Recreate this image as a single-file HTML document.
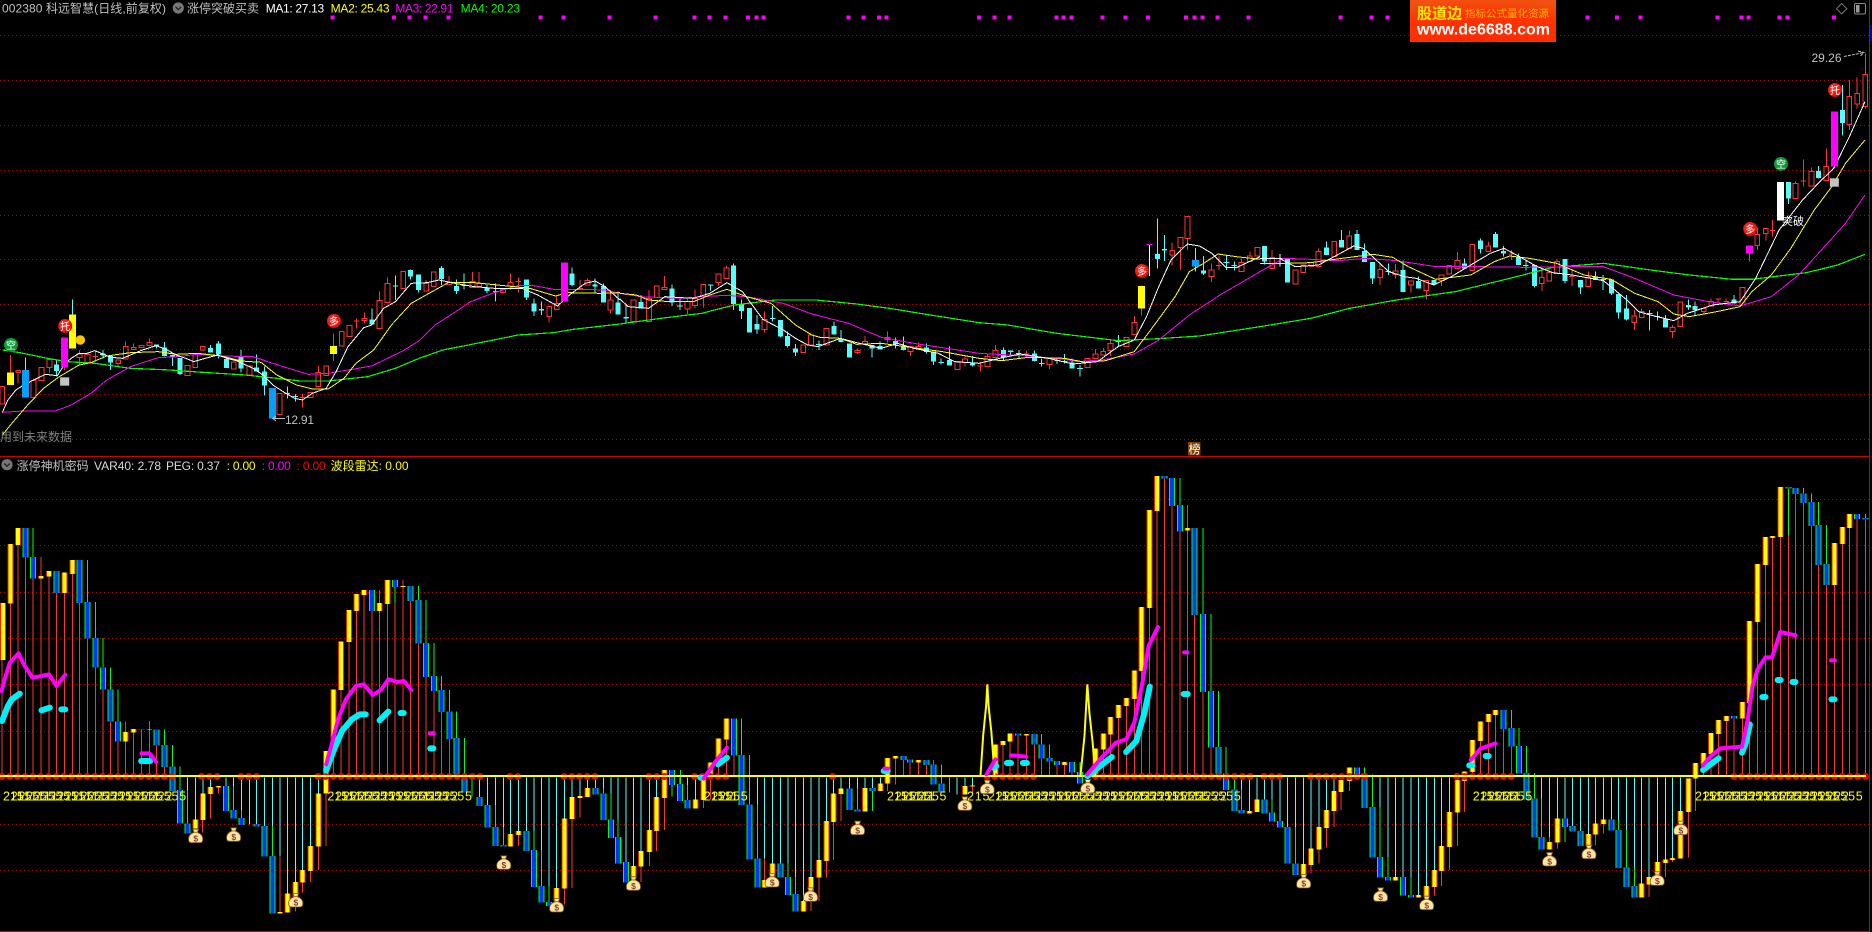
<!DOCTYPE html>
<html lang="zh">
<head>
<meta charset="utf-8">
<title>涨停神机密码</title>
<style>
html,body{margin:0;padding:0;background:#000;width:1872px;height:932px;overflow:hidden}
svg{display:block;position:absolute;left:0;top:0;font-family:"Liberation Sans","Noto Sans CJK SC",sans-serif}
path,polyline,rect,circle{vector-effect:non-scaling-stroke}
polyline,.n{fill:none}
.ma1{stroke:#fff;stroke-width:1;shape-rendering:crispEdges}
.ma2{stroke:#ff0;stroke-width:1;shape-rendering:crispEdges}
.ma3{stroke:#f0f;stroke-width:1;shape-rendering:crispEdges}
.ma4{stroke:#0f0;stroke-width:1.2;shape-rendering:crispEdges}
.wr{stroke:#ff3232;stroke-width:1;fill:none;shape-rendering:crispEdges}
.wc{stroke:#54fcfc;stroke-width:1;fill:none;shape-rendering:crispEdges}
.wg{stroke:#0f0;stroke-width:1;fill:none;shape-rendering:crispEdges}
.hr{fill:#000;stroke:#ff3232;stroke-width:1;shape-rendering:crispEdges}
.bc{stroke:#54fcfc;stroke-width:5;fill:none;shape-rendering:crispEdges}
.by{stroke:#ff0;stroke-width:7;fill:none;shape-rendering:crispEdges}
.bb{stroke:#00a0ff;stroke-width:7;fill:none;shape-rendering:crispEdges}
.bm{stroke:#f0f;stroke-width:7;fill:none;shape-rendering:crispEdges}
.bw{stroke:#fff;stroke-width:7;fill:none;shape-rendering:crispEdges}
.pt{stroke:#f0f;stroke-width:4;fill:none;shape-rendering:crispEdges}
.ho{stroke:#f02000;stroke-width:6;fill:none;shape-rendering:crispEdges}
.hy{stroke:#ff0;stroke-width:4;fill:none;shape-rendering:crispEdges}
.ge{stroke:#0f0;stroke-width:6;fill:none;shape-rendering:crispEdges}
.bl{stroke:#0038ff;stroke-width:4;fill:none;shape-rendering:crispEdges}
.tm{stroke:#f0f;stroke-width:4;fill:none;stroke-linecap:round;stroke-linejoin:round}
.tc{stroke:#00f0f8;stroke-width:6;fill:none;stroke-linecap:round;stroke-linejoin:round}
.dg{font-size:12.5px;fill:#ff0;letter-spacing:.78px}
</style>
</head>
<body>
<svg width="1872" height="932" viewBox="0 0 1872 932" xmlns="http://www.w3.org/2000/svg">
<defs>
<g id="bag">
<path d="M-3-7.5h6l-1.4 3.2q6 2.2 5.4 7.3 0 3-3 3h-8.1q-3 0-3-3-.6-5.1 5.4-7.3z" fill="#fbe6a4" stroke="#7a5410" stroke-width=".8"/>
<path d="M-2.2-4.4h4.4" stroke="#b07000" stroke-width="1" fill="none"/>
<text x="0" y="4.6" font-size="8.5" font-weight="bold" fill="#8a3a30" text-anchor="middle">$</text>
</g>
<radialGradient id="lg" cx=".5" cy="1" r="1">
<stop offset="0" stop-color="#ff2800"/><stop offset=".7" stop-color="#ff3400"/><stop offset="1" stop-color="#f05010"/>
</radialGradient>
<radialGradient id="rb" cx=".42" cy=".38" r=".7">
<stop offset="0" stop-color="#ff3a2a"/><stop offset=".8" stop-color="#e01010"/><stop offset="1" stop-color="#900"/>
</radialGradient>
<radialGradient id="gb" cx=".42" cy=".38" r=".7">
<stop offset="0" stop-color="#18b048"/><stop offset=".8" stop-color="#0a9030"/><stop offset="1" stop-color="#064"/>
</radialGradient>
</defs>

<!-- grid -->
<path d="M0 35.5H1869M0 80.5H1869M0 125.5H1869M0 170.5H1869M0 215.5H1869M0 259.5H1869M0 304.5H1869M0 349.5H1869M0 394.5H1869M0 439.5H1869M0 499.5H1869M0 545.5H1869M0 592.5H1869M0 638.5H1869M0 684.5H1869M0 731.5H1869M0 824.5H1869M0 870.5H1869" stroke="#b00000" stroke-width="1" stroke-dasharray="1 3" fill="none" shape-rendering="crispEdges"/>

<!-- UPPER PANEL 1 -->
<g transform="scale(.3954 .33333)">
<path class="pt" d="M841 46v12M997 46v12M1036 46v12M1076 46v12M1134 46v12M1367 46v12M1425 46v12M1541 46v12"/>
<path class="wr" d="M26 1065V1155M46 1111V1150M85 1135V1192M125 1078V1118M201 1052V1095M241 1052V1085M234 1070h14M299 1080V1100M318 1025V1077M338 1030V1050M378 1015V1040M513 1036V1055M765 1180V1223M758 1193h14M805 1098V1160M844 1000V1083M902 955V985M895 963h14M922 938V970M960 875V985M980 832V908M1078 840V873M1136 828V853M1195 816V862M1212 816V860M1291 820V870M1311 832V878M1304 845h14M1389 919V968M1408 890V928M1467 840V870M1460 865h14M1486 835V855M1544 870V940M163 1103V1110"/>
<path class="wc" d="M65 1072V1193M143 1078V1130M183 898V943M260 1050V1075M253 1063h14M280 1068V1110M396 1033V1045M416 1026V1070M436 1065V1098M455 1074V1125M533 1035V1057M552 1023V1075M573 1073V1104M610 1050V1118M649 1063V1115M669 1100V1187M727 1160V1195M720 1180h14M747 1182V1205M740 1189h14M941 925V974M1000 826V900M1038 808V838M1058 823V878M1116 798V855M1155 838V882M1174 820V868M1232 855V880M1253 850V905M1331 838V900M1350 895V948M1369 905V945M1447 802V860M1505 835V880M1526 850V908M1563 875V943"/>
<path class="hr" d="M0 1160h12V1212H0zM40 1111h12V1117h-12zM79 1142h12V1192h-12zM99 1103h12V1142h-12zM119 1078h12V1103h-12zM195 1062h12V1073h-12zM215 1063h12V1088h-12zM293 1080h12V1090h-12zM312 1040h12V1077h-12zM332 1042h12V1049h-12zM352 1036h12V1042h-12zM372 1027h12V1037h-12zM468 1097h12V1127h-12zM488 1063h12V1102h-12zM507 1040h12V1050h-12zM585 1086h12V1107h-12zM625 1098h12V1125h-12zM701 1180h12V1244h-12zM779 1178h12V1193h-12zM799 1118h12V1160h-12zM819 1098h12V1127h-12zM858 995h12V1038h-12zM878 976h12V1010h-12zM916 955h12V962h-12zM954 901h12V985h-12zM974 850h12V908h-12zM1014 814h12V866h-12zM1072 850h12V873h-12zM1091 816h12V860h-12zM1130 846h12V853h-12zM1189 845h12V862h-12zM1206 850h12V860h-12zM1266 868h12V878h-12zM1285 847h12V858h-12zM1383 919h12V950h-12zM1402 910h12V928h-12zM1480 842h12V855h-12zM1538 900h12V930h-12z"/>
<path class="bc" d="M143 1093V1113M260 1060V1066M280 1068V1088M396 1033V1040M416 1043V1068M436 1065V1072M455 1074V1122M533 1044V1057M552 1030V1063M573 1077V1104M610 1068V1106M649 1103V1115M669 1114V1157M941 958V974M1000 856V860M1038 810V830M1058 823V870M1116 804V837M1155 858V873M1174 855V858M1232 862V873M1253 873V876M1331 838V893M1350 910V935M1369 927V931M1447 820V855M1505 853V860M1526 858V908M1563 908V943"/>
<polyline class="ma4" points="6,1050 50,1058 120,1075 170,1085 240,1090 330,1105 430,1110 500,1116 620,1125 700,1135 760,1143 830,1143 930,1130 1000,1105 1060,1075 1120,1050 1240,1022 1310,1005 1400,998 1450,988 1568,972"/>
<polyline class="ma3" points="6,1237 60,1233 140,1233 180,1215 230,1180 270,1140 330,1100 400,1073 450,1070 500,1063 560,1068 640,1070 690,1090 730,1105 780,1123 830,1120 890,1108 940,1098 1020,1052 1060,1022 1100,975 1140,945 1190,905 1250,878 1310,857 1350,857 1400,868 1470,868 1530,870 1568,880"/>
<polyline class="ma2" points="6,1305 30,1270 70,1215 110,1165 150,1130 200,1095 230,1088 270,1068 330,1058 400,1055 445,1063 500,1060 560,1068 610,1083 660,1087 700,1125 750,1155 790,1167 830,1167 870,1135 900,1090 945,1050 990,975 1040,910 1085,880 1135,847 1200,848 1300,860 1340,865 1405,888 1435,878 1520,880 1568,878"/>
<polyline class="ma1" points="6,1237 20,1200 40,1170 60,1155 85,1140 115,1123 145,1127 165,1090 180,1075 200,1060 220,1060 240,1052 260,1062 280,1072 310,1075 330,1065 360,1050 395,1037 420,1048 445,1065 470,1075 490,1085 510,1078 550,1065 575,1075 600,1083 640,1105 665,1125 690,1155 720,1178 745,1195 765,1200 790,1180 825,1165 850,1115 880,1040 920,983 940,975 970,925 1000,905 1040,850 1080,848 1110,840 1150,850 1200,860 1250,865 1320,865 1360,885 1410,918 1440,885 1480,850 1505,843 1530,860 1568,900"/>
<path class="by" d="M26 1117V1155M183 943V1046M844 1038V1062"/>
<path class="bb" d="M65 1110V1193M689 1164V1256"/>
<path class="bm" d="M163 1012V1103M1428 787V905"/>
<path d="M152 1132h23v25h-23z" fill="#c4c4c4"/>
</g>

<!-- UPPER PANEL 2 -->
<g transform="translate(620 0) scale(.40816 .33333)">
<path class="pt" d="M87 46v12M182 46v12M219 46v12M258 46v12M314 46v12M334 46v12M351 46v12M560 46v12M597 46v12M635 46v12M653 46v12M880 46v12M917 46v12M954 46v12M1069 46v12M1087 46v12M1106 46v12M1182 46v12M1238 46v12M1294 46v12M1387 46v12M1407 46v12M1427 46v12M1464 46v12M1540 46v12"/>
<path class="wr" d="M71 870V965M109 828V868M165 897V942M184 868V925M204 853V923M241 822V858M261 798V835M354 935V998M468 1005V1035M582 1045V1062M575 1054h14M600 1008V1032M655 995V1028M712 1040V1068M731 1028V1047M845 1065V1100M883 1085V1115M876 1098h14M900 1060V1100M920 1035V1073M996 1052V1072M989 1062h14M1052 1076V1107M1165 1047V1076M1184 1044V1065M1202 1020V1068M1261 948V1004M1278 856V947M1353 727V797M1373 712V810M1390 649V750M1449 790V846M1467 768V810M1460 797h14M1523 775V815M1543 755V785"/>
<path class="wc" d="M15 915V970M8 953h14M52 885V925M128 853V918M147 895V930M140 918h14M222 855V872M215 855h14M278 790V930M298 898V957M336 945V1002M374 918V965M367 955h14M393 960V1012M410 995V1043M430 1032V1068M487 1022V1050M480 1033h14M524 965V1003M542 990V1028M618 1035V1073M637 1025V1048M675 1012V1045M694 1010V1052M751 1030V1060M768 1055V1095M787 1075V1093M780 1087h14M807 1040V1097M864 1068V1100M939 1043V1080M957 1052V1070M950 1055h14M977 1050V1075M970 1060h14M1015 1052V1085M1033 1075V1100M1026 1090h14M1071 1072V1092M1064 1082h14M1089 1062V1090M1082 1085h14M1108 1075V1106M1127 1095V1130M1120 1105h14M1221 1005V1038M1214 1025h14M1317 655V805M1334 705V783M1410 744V815M1430 768V825M1486 765V810M1479 787h14M1505 785V812M1498 797h14"/>
<path d="M1297 733V828" stroke="#fff" stroke-width="1" fill="none" shape-rendering="crispEdges"/>
<path d="M1290 733h15" stroke="#f0f" stroke-width="1" fill="none" shape-rendering="crispEdges"/>
<path class="hr" d="M27 900h12V965h-12zM65 895h12V965h-12zM84 858h12V892h-12zM103 862h12V868h-12zM159 905h12V927h-12zM178 895h12V917h-12zM198 853h12V890h-12zM235 822h12V848h-12zM255 804h12V835h-12zM348 958h12V988h-12zM443 1035h12V1058h-12zM462 1005h12V1035h-12zM500 985h12V1035h-12zM576 1052h12V1058h-12zM594 1025h12V1032h-12zM649 1012h12V1018h-12zM706 1040h12V1055h-12zM725 1040h12V1047h-12zM821 1084h12V1108h-12zM839 1077h12V1088h-12zM894 1069h12V1100h-12zM914 1051h12V1073h-12zM1046 1076h12V1094h-12zM1139 1075h12V1103h-12zM1159 1062h12V1076h-12zM1178 1054h12V1065h-12zM1196 1030h12V1052h-12zM1235 1012h12V1040h-12zM1255 967h12V1004h-12zM1347 751h12V765h-12zM1367 712h12V743h-12zM1384 649h12V715h-12zM1443 810h12V830h-12zM1517 787h12V815h-12zM1537 768h12V785h-12zM1556 742h12V768h-12z"/>
<path class="bc" d="M15 952V955M52 906V925M128 865V908M147 917V919M278 796V912M298 913V933M317 924V998M336 972V988M374 954V956M393 960V1010M410 1008V1038M430 1045V1058M524 978V1003M542 1016V1026M562 1030V1073M618 1035V1045M637 1038V1048M675 1023V1033M694 1038V1050M751 1043V1056M768 1055V1085M807 1080V1097M864 1090V1097M939 1050V1073M957 1052V1054M1015 1060V1083M1108 1087V1106M1317 762V777M1334 747V752M1430 811V820"/>
<polyline class="ma4" points="0,972 100,955 200,940 280,915 380,900 480,900 580,912 660,925 760,945 880,968 950,975 1070,1000 1220,1022 1320,1016 1420,1008 1568,980"/>
<polyline class="ma3" points="0,880 50,890 150,895 200,890 260,886 310,890 400,910 470,942 560,970 640,1012 720,1030 800,1045 880,1060 1000,1068 1090,1078 1120,1085 1180,1080 1260,1062 1320,1020 1395,945 1470,885 1568,815"/>
<polyline class="ma2" points="0,880 40,885 70,900 120,905 180,905 220,885 262,868 310,890 370,910 430,975 470,1005 490,1012 540,1015 580,1033 640,1030 700,1040 790,1055 880,1075 935,1082 1000,1072 1090,1075 1140,1087 1190,1082 1260,1055 1300,990 1360,890 1395,815 1430,790 1465,762 1510,770 1568,778"/>
<polyline class="ma1" points="0,897 20,920 70,925 110,890 180,895 220,880 262,848 300,875 330,925 350,958 400,990 430,1015 460,1035 485,1040 540,1015 580,1028 640,1045 680,1030 720,1045 780,1060 820,1085 880,1090 930,1075 980,1062 1050,1075 1110,1092 1170,1085 1220,1040 1260,1020 1290,950 1320,860 1350,780 1390,732 1420,738 1450,760 1485,803 1510,803 1568,770"/>
<path class="by" d="M1278 858V926"/>
<path class="bb" d="M1410 780V800"/>
</g>

<!-- UPPER PANEL 3 -->
<g transform="translate(1260 0) scale(.39032 .33333)">
<path class="pt" d="M206 46v12M286 46v12M327 46v12M839 46v12M915 46v12M975 46v12M1172 46v12M1233 46v12M1251 46v12M1331 46v12M1351 46v12M1470 46v12"/>
<path class="wr" d="M31 750V805M131 788V800M150 745V800M229 692V745M308 790V855M347 792V835M387 843V878M426 841V898M465 825V858M506 756V805M585 725V755M644 750V780M637 762h14M722 805V873M741 805V843M761 777V820M799 808V858M792 829h14M841 815V860M959 930V990M978 925V953M1057 975V1014M1137 925V940M1156 896V918M1174 895V915M1167 897h14M1194 895V912M1187 905h14M1254 761V785M1274 683V750M1296 685V722M1313 660V710M1306 692h14M1372 545V596M1392 478V560M1385 543h14M1413 503V558M1451 445V542M1510 240V390M1530 232V325M1551 160V325"/>
<path class="wc" d="M11 738V793M170 725V765M209 690V742M249 690V750M268 730V786M288 786V852M329 790V825M322 815h14M367 782V876M406 830V866M446 840V853M524 775V805M565 716V760M603 696V742M624 738V770M662 760V795M681 780V812M674 797h14M703 795V862M782 777V850M821 840V882M860 815V840M879 825V870M872 838h14M900 838V885M918 882V955M939 885V962M998 930V992M991 940h14M1018 935V962M1011 950h14M1039 945V983M1098 898V930M1115 905V945M1215 885V910M1354 546V612M1431 498V535M1492 255V407"/>
<path d="M51 762V800M44 775h14" stroke="#fff" stroke-width="1" fill="none" shape-rendering="crispEdges"/>
<path class="hr" d="M25 772h12V805h-12zM85 810h12V852h-12zM105 795h12V818h-12zM125 788h12V800h-12zM144 754h12V800h-12zM184 724h12V770h-12zM223 708h12V745h-12zM302 808h12V832h-12zM341 813h12V823h-12zM381 843h12V855h-12zM420 841h12V872h-12zM459 825h12V842h-12zM479 797h12V822h-12zM500 782h12V805h-12zM538 733h12V812h-12zM579 738h12V755h-12zM716 832h12V850h-12zM735 817h12V843h-12zM755 785h12V820h-12zM835 833h12V860h-12zM953 948h12V968h-12zM972 934h12V953h-12zM1051 982h12V995h-12zM1071 906h12V980h-12zM1131 925h12V935h-12zM1150 905h12V918h-12zM1230 862h12V915h-12zM1268 703h12V737h-12zM1290 685h12V700h-12zM1366 550h12V596h-12zM1407 514h12V558h-12zM1445 499h12V542h-12zM1504 289h12V374h-12zM1524 280h12V312h-12zM1545 224h12V320h-12z"/>
<path class="bc" d="M11 738V785M70 775V847M170 742V765M209 720V742M249 702V750M268 753V786M288 786V836M367 810V876M406 843V866M446 840V853M524 790V805M565 722V747M603 702V742M624 753V760M662 772V795M703 795V858M782 777V843M821 840V863M860 830V840M900 838V880M918 882V938M939 925V958M1039 957V983M1098 915V923M1115 918V930M1215 898V910M1354 546V595M1431 513V534M1492 330V369"/>
<polyline class="ma4" points="0,980 130,955 230,925 350,900 500,875 640,835 750,802 880,790 1000,810 1100,825 1210,838 1260,838 1400,818 1480,795 1550,763"/>
<polyline class="ma3" points="0,815 60,775 130,778 200,782 270,775 350,782 450,800 560,800 680,802 780,800 880,800 960,835 1060,885 1150,905 1230,918 1310,890 1380,825 1450,735 1500,670 1550,585"/>
<polyline class="ma2" points="0,790 60,790 130,788 210,775 290,763 340,772 380,800 450,838 540,825 600,785 640,768 690,775 760,790 830,825 900,838 960,880 1020,905 1060,942 1100,950 1170,935 1230,920 1260,875 1310,825 1360,745 1420,630 1465,560 1500,490 1550,420"/>
<polyline class="ma1" points="0,775 50,775 90,800 150,795 190,770 240,738 265,745 330,815 370,830 400,835 445,855 490,830 540,795 590,760 625,745 665,770 710,800 750,818 800,825 880,842 940,900 970,935 1000,945 1060,962 1095,940 1160,915 1230,905 1270,835 1330,690 1390,600 1430,550 1470,505 1510,410 1550,305"/>
<path class="bm" d="M1254 736V761M1472 334V500"/>
<path class="bw" d="M1334 546V662"/>
<path d="M1460 535h23v25h-23z" fill="#c4c4c4"/>
</g>

<!-- LOWER PANEL 1 -->
<g transform="translate(0 456) scale(.3954 .33333)">
<path class="wr" d="M5 612V962M27 443V962M46 267V962M64 305V962M84 368V962M104 303V962M124 362V962M143 411V962M163 411V962M183 354V962M201 441V962M221 548V962M241 635V962M260 701V962M280 797V962M299 857V962M318 797V962M338 830V962M358 821V962M378 795V962M396 869V962M416 933V962M512 1092V1130M533 1014V1088M552 995V1012M708 1200V1368M747 1340V1366M765 1280V1310M785 1245V1278M805 1172V1242M825 1012V1170M843 888V962M863 702V962M883 558V962M901 465V962M921 417V962M941 465V962M960 402V962M980 444V962M999 441V962M1019 372V962M1038 435V962M1058 563V962M1078 663V962M1097 705V962M1116 768V962M1137 849V962M1155 955V962M1311 1137V1170M1428 1298V1346M1447 1089V1296M1467 1026V1085"/>
<path class="wc" d="M474 965V1102M494 965V1090M513 965V1012M533 965V993M572 965V990M591 965V1062M611 965V1086M631 965V1104M649 965V1104M669 965V1110M689 965V1200M708 965V1200M727 965V1312M747 965V1278M765 965V1242M785 965V1170M805 965V1012M1194 965V1005M1213 965V1023M1233 965V1047M1253 965V1113M1273 965V1167M1291 965V1134M1311 965V1125M1331 965V1125M1350 965V1182M1370 965V1290M1388 965V1338M1408 965V1296M1428 965V1087M1447 965V1023M1467 965V1020M1486 965V996M1506 965V996M1526 965V1012M1545 965V1090M1563 965V1143"/>
<path class="wg" d="M84 216V303M221 312V438M241 438V546M260 546V634M280 634V700M299 700V796M416 820V867M436 867V931M455 931V1002M474 1002V1102M591 990V1062M611 1062V1086M631 1104V1106M689 1110V1200M999 393V441M1058 390V432M1078 432V561M1097 561V660M1116 660V702M1137 702V766M1155 766V846M1175 846V955M1194 955V1022M1253 1047V1113M1273 1113V1167M1350 1125V1182M1370 1182V1290M1388 1290V1338M1526 996V1012M1545 1012V1090M1563 1090V1143"/>
<path class="ho" d="M7 441V612M27 264V443M46 216V267M104 360V368M124 345V362M163 350V411M183 312V354M318 828V857M338 819V830M378 819V821M494 1090V1118M513 1012V1092M533 993V1014M552 990V995M708 1368V1373M727 1312V1370M747 1278V1340M765 1242V1280M785 1170V1245M805 1012V1172M825 885V1012M843 700V888M863 556V702M883 462V558M901 414V465M921 402V417M960 441V465M980 372V444M1019 390V393M1291 1134V1172M1311 1125V1137M1408 1296V1345M1428 1087V1298M1447 1023V1089M1467 1020V1026M1486 996V1023"/>
<path class="hy" d="M7 441V612M27 264V443M46 216V267M104 360V368M124 345V362M163 350V411M183 312V354M318 828V857M338 819V830M378 819V821M494 1090V1118M513 1012V1092M533 993V1014M552 990V995M708 1368V1373M727 1312V1370M747 1278V1340M765 1242V1280M785 1170V1245M805 1012V1172M825 885V1012M843 700V888M863 556V702M883 462V558M901 414V465M921 402V417M960 441V465M980 372V444M1019 390V393M1291 1134V1172M1311 1125V1137M1408 1296V1345M1428 1087V1298M1447 1023V1089M1467 1020V1026M1486 996V1023"/>
<path class="ge" d="M64 216V305M84 303V368M143 345V411M201 312V441M221 438V548M241 546V635M260 634V701M280 700V797M299 796V857M358 819V821M396 820V869M416 867V933M436 931V1005M455 1002V1103M474 1102V1133M572 990V1065M591 1062V1088M611 1086V1107M649 1104V1112M669 1110V1202M689 1200V1373M941 402V465M999 372V393M1038 390V435M1058 432V563M1078 561V663M1097 660V705M1116 702V768M1137 766V849M1155 846V955M1175 955V1009M1213 1023V1050M1233 1047V1115M1253 1113V1170M1273 1167V1172M1331 1125V1185M1350 1182V1293M1370 1290V1340M1388 1338V1350M1506 996V1015M1526 1012V1092M1545 1090V1146M1563 1143V1222"/>
<path class="bl" d="M64 216V305M84 303V368M143 345V411M201 312V441M221 438V548M241 546V635M260 634V701M280 700V797M299 796V857M358 819V821M396 820V869M416 867V933M436 931V1005M455 1002V1103M474 1102V1133M572 990V1065M591 1062V1088M611 1086V1107M649 1104V1112M669 1110V1202M689 1200V1373M941 402V465M999 372V393M1038 390V435M1058 432V563M1078 561V663M1097 660V705M1116 702V768M1137 766V849M1155 846V955M1175 955V1009M1213 1023V1050M1233 1047V1115M1253 1113V1170M1273 1167V1172M1331 1125V1185M1350 1182V1293M1370 1290V1340M1388 1338V1350M1506 996V1015M1526 1012V1092M1545 1090V1146M1563 1143V1222"/>
</g>

<!-- LOWER PANEL 2 -->
<g transform="translate(620 456) scale(.40816 .33333)">
<path class="wr" d="M52 1232V1278M72 1188V1230M90 1125V1185M109 1026V1122M205 1032V1056M222 965V1030M241 925V962M261 850V962M279 899V962M354 1208V1272M449 1314V1335M468 1337V1365M487 1265V1335M506 1215V1265M523 1098V1212M542 1014V1095M655 982V1005M675 908V985M694 912V962M711 920V962M731 920V962M751 927V962M768 912V925M864 992V1010M938 867V962M956 857V962M975 838V962M996 838V962M1015 865V962M1033 908V962M1052 917V962M1071 927V962M1089 927V962M1108 950V962M1165 910V962M1184 880V962M1202 835V962M1221 786V962M1241 750V962M1260 729V962M1278 645V962M1297 456V962M1316 165V962M1334 68V962M1353 150V962M1372 226V962M1390 147V962M1408 477V962M1428 708V962M1448 875V962"/>
<path class="wc" d="M15 965V1218M33 965V1230M52 965V1185M72 965V1122M90 965V1023M147 965V984M165 965V1032M185 965V1030M317 965V1045M337 965V1208M354 965V1208M374 965V1222M393 965V1222M411 965V1263M430 965V1314M449 965V1335M468 965V1263M487 965V1212M506 965V1095M523 965V1012M542 965V998M562 965V998M582 965V1060M600 965V996M619 965V996M638 965V982M788 965V982M807 965V1010M826 965V1015M845 965V990M864 965V988M1505 965V1000M1523 965V1062M1542 965V1065M1561 965V1030"/>
<path class="wg" d="M2 1143V1222M128 987V1022M148 942V984M165 987V1032M298 787V897M317 897V1045M337 1045V1208M411 1222V1263M430 1263V1314M582 998V1060M619 1005V1065M788 925V982M807 965V1010M1033 834V865M1052 865V906M1127 918V948M1372 66V147M1428 216V474M1448 474V705M1466 705V873M1485 873V952M1505 952V1000M1523 1000V1062"/>
<path class="ho" d="M33 1230V1262M52 1185V1232M72 1122V1188M90 1023V1125M109 942V1026M185 1030V1058M205 962V1032M222 920V965M241 847V925M261 787V850M354 1272V1295M374 1222V1275M449 1335V1367M468 1263V1337M487 1212V1265M506 1095V1215M523 1012V1098M542 998V1014M600 996V1067M638 982V1005M655 906V982M675 900V908M731 912V920M845 990V1015M864 988V992M920 865V962M938 855V867M956 832V857M996 834V838M1089 918V927M1165 877V962M1184 832V880M1202 783V835M1221 747V786M1241 726V750M1260 643V729M1278 453V645M1297 162V456M1316 60V165M1390 216V224M1542 1065V1073M1561 1030V1068"/>
<path class="hy" d="M33 1230V1262M52 1185V1232M72 1122V1188M90 1023V1125M109 942V1026M185 1030V1058M205 962V1032M222 920V965M241 847V925M261 787V850M354 1272V1295M374 1222V1275M449 1335V1367M468 1263V1337M487 1212V1265M506 1095V1215M523 1012V1098M542 998V1014M600 996V1067M638 982V1005M655 906V982M675 900V908M731 912V920M845 990V1015M864 988V992M920 865V962M938 855V867M956 832V857M996 834V838M1089 918V927M1165 877V962M1184 832V880M1202 783V835M1221 747V786M1241 726V750M1260 643V729M1278 453V645M1297 162V456M1316 60V165M1390 216V224M1542 1065V1073M1561 1030V1068"/>
<path class="ge" d="M15 1218V1280M128 942V987M147 984V1035M165 1032V1058M279 787V899M298 897V1047M317 1045V1210M337 1208V1295M393 1222V1265M411 1263V1317M430 1314V1367M562 998V1062M582 1060V1067M619 996V1005M694 900V912M711 910V920M751 912V927M768 925V985M788 982V1010M975 832V838M1015 834V865M1033 865V908M1052 906V917M1071 915V927M1108 918V950M1127 948V982M1334 60V68M1353 66V150M1372 147V226M1408 216V477M1428 474V708M1448 705V875M1466 873V955M1485 952V1002M1505 1000V1065M1523 1062V1073"/>
<path class="bl" d="M15 1218V1280M128 942V987M147 984V1035M165 1032V1058M279 787V899M298 897V1047M317 1045V1210M337 1208V1295M393 1222V1265M411 1263V1317M430 1314V1367M562 998V1062M582 1060V1067M619 996V1005M694 900V912M711 910V920M751 912V927M768 925V985M788 982V1010M975 832V838M1015 834V865M1033 865V908M1052 906V917M1071 915V927M1108 918V950M1127 948V982M1334 60V68M1353 66V150M1372 147V226M1408 216V477M1428 474V708M1448 705V875M1466 873V955M1485 952V1002M1505 1000V1065M1523 1062V1073"/>
</g>

<!-- LOWER PANEL 3 -->
<g transform="translate(1260 456) scale(.39032 .33333)">
<path class="wr" d="M131 1227V1252M151 1180V1223M170 1116V1175M190 1065V1113M208 1008V1062M229 975V1005M447 1293V1318M465 1245V1290M486 1173V1242M506 1070V1170M524 975V1068M544 948V962M565 855V962M585 798V962M603 777V962M624 819V962M644 872V962M742 1143V1158M762 1160V1178M860 1136V1168M880 1104V1133M997 1285V1323M1039 1221V1263M1057 1212V1218M1098 1068V1205M1116 968V1065M1136 924V962M1156 894V962M1175 834V962M1195 795V962M1215 788V962M1236 780V962M1254 741V962M1274 498V962M1295 327V962M1313 246V962M1334 243V962M1354 240V962M1372 114V962M1392 141V962M1413 210V962M1431 327V962M1451 387V962M1472 387V962M1492 264V962M1510 216V962M1530 189V962M1551 189V962"/>
<path class="wc" d="M11 965V1030M31 965V1070M51 965V1095M70 965V1113M91 965V1222M111 965V1224M131 965V1177M151 965V1113M170 965V1062M190 965V1005M288 965V1053M308 965V1203M328 965V1263M347 965V1263M367 965V1263M387 965V1317M406 965V1317M427 965V1290M447 965V1242M465 965V1170M486 965V1068M506 965V972M703 965V1028M721 965V1143M742 965V1143M762 965V1087M782 965V1087M801 965V1110M821 965V1125M841 965V1134M860 965V1102M880 965V1090M900 965V1090M919 965V1122M939 965V1234M959 965V1290M977 965V1282M997 965V1263M1018 965V1218M1039 965V1210M1057 965V1206M1077 965V1065"/>
<path class="wg" d="M31 1030V1070M91 1113V1222M249 934V955M268 934V953M288 955V1053M308 1053V1203M328 1203V1263M387 1263V1317M644 762V816M663 816V870M683 870V951M703 951V1028M721 1028V1143M782 1113V1158M919 1090V1122M939 1122V1234M959 1234V1290M1354 93V240M1392 96V112M1413 112V138M1431 138V207M1451 207V324M1530 174V189M1551 174V186"/>
<path class="ho" d="M111 1224V1255M131 1177V1227M151 1113V1180M170 1062V1116M190 1005V1065M208 972V1008M229 934V975M347 1263V1274M406 1317V1325M427 1290V1320M447 1242V1293M465 1170V1245M486 1068V1173M506 972V1070M524 946V975M544 852V948M565 796V855M585 774V798M603 762V777M742 1158V1180M762 1087V1160M841 1134V1170M860 1102V1136M880 1090V1104M977 1282V1325M997 1263V1285M1018 1218V1265M1039 1210V1221M1057 1206V1212M1077 1065V1208M1098 968V1068M1116 921V968M1136 891V924M1156 831V894M1175 792V834M1195 780V795M1236 738V788M1254 495V741M1274 324V498M1295 243V327M1313 240V246M1334 93V243M1472 261V387M1492 213V264M1510 174V216"/>
<path class="hy" d="M111 1224V1255M131 1177V1227M151 1113V1180M170 1062V1116M190 1005V1065M208 972V1008M229 934V975M347 1263V1274M406 1317V1325M427 1290V1320M447 1242V1293M465 1170V1245M486 1068V1173M506 972V1070M524 946V975M544 852V948M565 796V855M585 774V798M603 762V777M742 1158V1180M762 1087V1160M841 1134V1170M860 1102V1136M880 1090V1104M977 1282V1325M997 1263V1285M1018 1218V1265M1039 1210V1221M1057 1206V1212M1077 1065V1208M1098 968V1068M1116 921V968M1136 891V924M1156 831V894M1175 792V834M1195 780V795M1236 738V788M1254 495V741M1274 324V498M1295 243V327M1313 240V246M1334 93V243M1472 261V387M1492 213V264M1510 174V216"/>
<path class="ge" d="M11 1030V1073M31 1070V1097M51 1095V1115M70 1113V1223M91 1222V1257M249 934V955M268 953V1056M288 1053V1205M308 1203V1265M328 1263V1274M367 1263V1318M387 1317V1325M624 762V819M644 816V872M663 870V952M683 951V1030M703 1028V1145M721 1143V1180M782 1087V1113M801 1110V1127M821 1125V1170M900 1090V1124M919 1122V1236M939 1234V1293M959 1290V1325M1215 780V788M1354 93V98M1372 96V114M1392 112V141M1413 138V210M1431 207V327M1451 324V387M1530 174V189M1551 186V191"/>
<path class="bl" d="M11 1030V1073M31 1070V1097M51 1095V1115M70 1113V1223M91 1222V1257M249 934V955M268 953V1056M288 1053V1205M308 1203V1265M328 1263V1274M367 1263V1318M387 1317V1325M624 762V819M644 816V872M663 870V952M683 951V1030M703 1028V1145M721 1143V1180M782 1087V1113M801 1110V1127M821 1125V1170M900 1090V1124M919 1122V1236M939 1234V1293M959 1290V1325M1215 780V788M1354 93V98M1372 96V114M1392 112V141M1413 138V210M1431 207V327M1451 324V387M1530 174V189M1551 186V191"/>
</g>

<!-- axis: red dots and yellow line -->
<path d="M2 776.5H172.5M201.7 776.5H218M241 776.5H257M318 776.5H457.5M464.6 776.5H487.5M510 776.5H518.5M564 776.5H596M649 776.5H665M694.7 776.5H726.5M832.6 776.5H833M987 776.5H1035M1095.5 776.5H1257M1264 776.5H1280.5M1310.7 776.5H1365M1457 776.5H1518M1734 776.5H1866" stroke="#f00000" stroke-width="7" stroke-linecap="round" stroke-dasharray="0 7.73" fill="none"/>
<rect x="0" y="775" width="1866" height="2" fill="#ff0"/>
<g transform="translate(620 456) scale(.40816 .33333)">
<polyline style="stroke:#ff0;stroke-width:2" points="883,962 890,835 897,750 900,685 903,750 910,830 918,962"/>
<polyline style="stroke:#ff0;stroke-width:2" points="1128,962 1138,840 1145,685 1150,770 1158,860 1165,962"/>
</g>

<!-- digits row -->
<g class="dg">
<text x="3" y="800.5">2222222222222222222222</text><text x="9.9" y="800.5">1111111111111111111111</text><text x="16.9" y="800.5">5555555555555555555555</text>
<text x="327.4" y="800.5">22222222222222222</text><text x="334.3" y="800.5">11111111111111111</text><text x="341.3" y="800.5">55555555555555555</text>
<text x="703.7" y="800.5">2222</text><text x="710.6" y="800.5">1111</text><text x="717.6" y="800.5">5555</text>
<text x="887" y="800.5">222222</text><text x="893.9" y="800.5">111111</text><text x="900.9" y="800.5">555555</text>
<text x="967" y="800.5">215</text>
<text x="988" y="800.5">2222222222222222222222222222222</text><text x="994.9" y="800.5">1111111111111111111111111111111</text><text x="1001.9" y="800.5">5555555555555555555555555555555</text>
<text x="1472.7" y="800.5">222222</text><text x="1479.6" y="800.5">111111</text><text x="1486.6" y="800.5">555555</text>
<text x="1695" y="800.5">22222222222222222222</text><text x="1701.9" y="800.5">11111111111111111111</text><text x="1708.9" y="800.5">55555555555555555555</text>
</g>

<!-- thick overlays -->
<g transform="translate(0 456) scale(.3954 .33333)">
<polyline class="tc" points="5,795 20,750 30,730 50,713"/>
<path class="tc" d="M105 763L126 755M155 760h10M357 915H380M960 793L982 767M1013 771h8M1088 877h8"/>
<polyline class="tc" points="825,943 845,880 865,825 890,790 910,775 925,775"/>
<polyline class="tm" points="4,705 13,665 25,620 47,592 60,625 82,665 105,660 124,655 143,690 165,656"/>
<polyline class="tm" points="358,892 378,892 395,918"/>
<polyline class="tm" points="825,925 840,860 855,790 875,730 900,690 920,685 943,717 965,700 982,670 1005,678 1022,675 1040,702"/>
<path class="tm" d="M1087 832h10"/>
</g>
<g transform="translate(620 456) scale(.40816 .33333)">
<path class="tc" d="M197 965h.1M240 925L262 905M646 945h10M915 935L922 930M948 921h10M987 921h10M1381 714h10"/>
<polyline class="tc" points="1145,960 1205,903"/>
<polyline class="tc" points="1240,888 1265,855 1285,770 1298,692"/>
<polyline class="tm" points="205,968 235,915 262,875"/>
<path class="tm" d="M648 938h8M898 955L920 910M958 898L995 902M1382 589h8"/>
<polyline class="tm" points="1145,955 1180,905 1215,860 1240,850 1260,800 1280,680 1295,570 1318,513"/>
</g>
<g transform="translate(1260 456) scale(.39032 .33333)">
<path class="tc" d="M536 928h8M578 900h8M1287 723h8M1326 672h8M1364 678h8M1464 730h8"/>
<polyline class="tc" points="1135,942 1175,907"/>
<polyline class="tc" points="1235,890 1245,860 1255,805"/>
<polyline class="tm" points="540,912 565,878 603,862"/>
<polyline class="tm" points="1135,928 1155,900 1180,877 1235,872 1248,800 1262,690 1275,640 1295,604 1312,604 1333,528 1372,538"/>
<path class="tm" d="M1463 613h10"/>
</g>

<!-- money bags -->
<use href="#bag" x="195.7" y="836.7"/><use href="#bag" x="233.7" y="835.3"/><use href="#bag" x="503.8" y="863.3"/><use href="#bag" x="295.8" y="901"/><use href="#bag" x="556.7" y="906"/>
<use href="#bag" x="633.5" y="884.3"/><use href="#bag" x="772.2" y="881"/><use href="#bag" x="810.6" y="895.3"/><use href="#bag" x="857.6" y="828.7"/><use href="#bag" x="964.9" y="804.3"/><use href="#bag" x="987.3" y="787.7"/><use href="#bag" x="1087.8" y="787"/>
<use href="#bag" x="1303.7" y="882"/><use href="#bag" x="1380.6" y="895.3"/><use href="#bag" x="1426.7" y="903.7"/><use href="#bag" x="1549.6" y="860"/><use href="#bag" x="1589" y="852.7"/><use href="#bag" x="1657.3" y="879.3"/><use href="#bag" x="1680.8" y="828.7"/>

<!-- badges -->
<g font-size="10" fill="#fff" text-anchor="middle">
<circle cx="11" cy="345" r="7" fill="url(#gb)"/><text x="11" y="349">空</text>
<circle cx="65.2" cy="326" r="7" fill="url(#rb)"/><text x="65.2" y="330">托</text>
<circle cx="334" cy="321" r="7" fill="url(#rb)"/><text x="334" y="325">多</text>
<circle cx="1142" cy="271" r="7" fill="url(#rb)"/><text x="1142" y="275">多</text>
<circle cx="1750.2" cy="229" r="7" fill="url(#rb)"/><text x="1750.2" y="233">多</text>
<circle cx="1781" cy="164" r="7" fill="url(#gb)"/><text x="1781" y="168">空</text>
<circle cx="1835" cy="90" r="7" fill="url(#rb)"/><text x="1835" y="94">托</text>
</g>
<circle cx="80.3" cy="340" r="4.8" fill="#ffc800"/>

<!-- header -->
<text x="2" y="12.5" font-size="12" fill="#c0c0c0" textLength="164">002380 科远智慧(日线,前复权)</text>
<circle cx="178.3" cy="8" r="5.6" fill="#777"/><path d="M175.5 6.8l2.8 2.8 2.8-2.8" stroke="#222" stroke-width="1.3" fill="none"/>
<text x="187" y="12.5" font-size="12" fill="#c0c0c0">涨停突破买卖</text>
<text x="265.7" y="12.5" font-size="12" fill="#fff" textLength="58.5">MA1: 27.13</text>
<text x="330.6" y="12.5" font-size="12" fill="#ff0" textLength="59">MA2: 25.43</text>
<text x="395.4" y="12.5" font-size="12" fill="#f0f" textLength="58">MA3: 22.91</text>
<text x="460.6" y="12.5" font-size="12" fill="#0f0" textLength="59.4">MA4: 20.23</text>

<text x="0" y="441" font-size="12" fill="#808080">用到未来数据</text>
<path d="M285 418.5H273l3-2.5m-3 2.5l3 2.5" stroke="#c0c0c0" stroke-width="1" fill="none"/>
<text x="285" y="424" font-size="12" fill="#c0c0c0" textLength="29">12.91</text>
<text x="1811.5" y="62" font-size="12" fill="#c0c0c0" textLength="30">29.26</text>
<path d="M1844 56.5l20-4m-6-1.5l6 1.5-4 4" stroke="#c0c0c0" stroke-width="1" stroke-dasharray="3 1" fill="none"/>
<text x="1782" y="225" font-size="11" fill="#fff">突破</text>

<rect x="1188" y="442" width="12.5" height="13.5" fill="#804000"/>
<text x="1188.5" y="453.5" font-size="12" fill="#fff">榜</text>

<!-- lower header -->
<circle cx="7" cy="464.7" r="5.6" fill="#777"/><path d="M4.2 463.5l2.8 2.8 2.8-2.8" stroke="#222" stroke-width="1.3" fill="none"/>
<text x="16.6" y="470" font-size="12" fill="#c0c0c0">涨停神机密码</text>
<text x="94" y="470" font-size="12" fill="#d8d8d8" textLength="67">VAR40: 2.78</text>
<text x="166" y="470" font-size="12" fill="#d8d8d8" textLength="54">PEG: 0.37</text>
<text x="226.6" y="470" font-size="12" fill="#ff0" textLength="29">: 0.00</text>
<text x="261.8" y="470" font-size="12" fill="#f0f" textLength="29">: 0.00</text>
<text x="296.6" y="470" font-size="12" fill="#f00" textLength="29">: 0.00</text>
<text x="330.6" y="470" font-size="12" fill="#ff0" textLength="78">波段雷达: 0.00</text>

<!-- logo -->
<rect x="1410" y="0" width="146" height="42" fill="url(#lg)"/>
<text x="1417" y="18.5" font-size="15" font-weight="bold" fill="#ffe800">股道边</text>
<text x="1465" y="17" font-size="10.5" fill="#ffb010">指标公式量化资源</text>
<text x="1417" y="34.5" font-size="16" font-weight="bold" fill="#fff" textLength="133">www.de6688.com</text>

<!-- top-right icons -->
<path d="M1841.7 3.5l5.2 5.2-5.2 5.2-5.2-5.2z" stroke="#777" fill="none"/>
<rect x="1854.5" y="3.5" width="11" height="10.5" rx="1.5" stroke="#888" fill="none"/>
<rect x="1856" y="5" width="3.5" height="7.5" fill="#999"/>

<!-- borders -->
<rect x="0" y="456" width="1870" height="1" fill="#d00000"/>
<rect x="0" y="931" width="1870" height="1" fill="#d00000"/>
<rect x="1869" y="0" width="1" height="932" fill="#d00000"/>
<rect x="1870" y="25" width="2" height="16" fill="#0000a0"/>
</svg>
</body>
</html>
